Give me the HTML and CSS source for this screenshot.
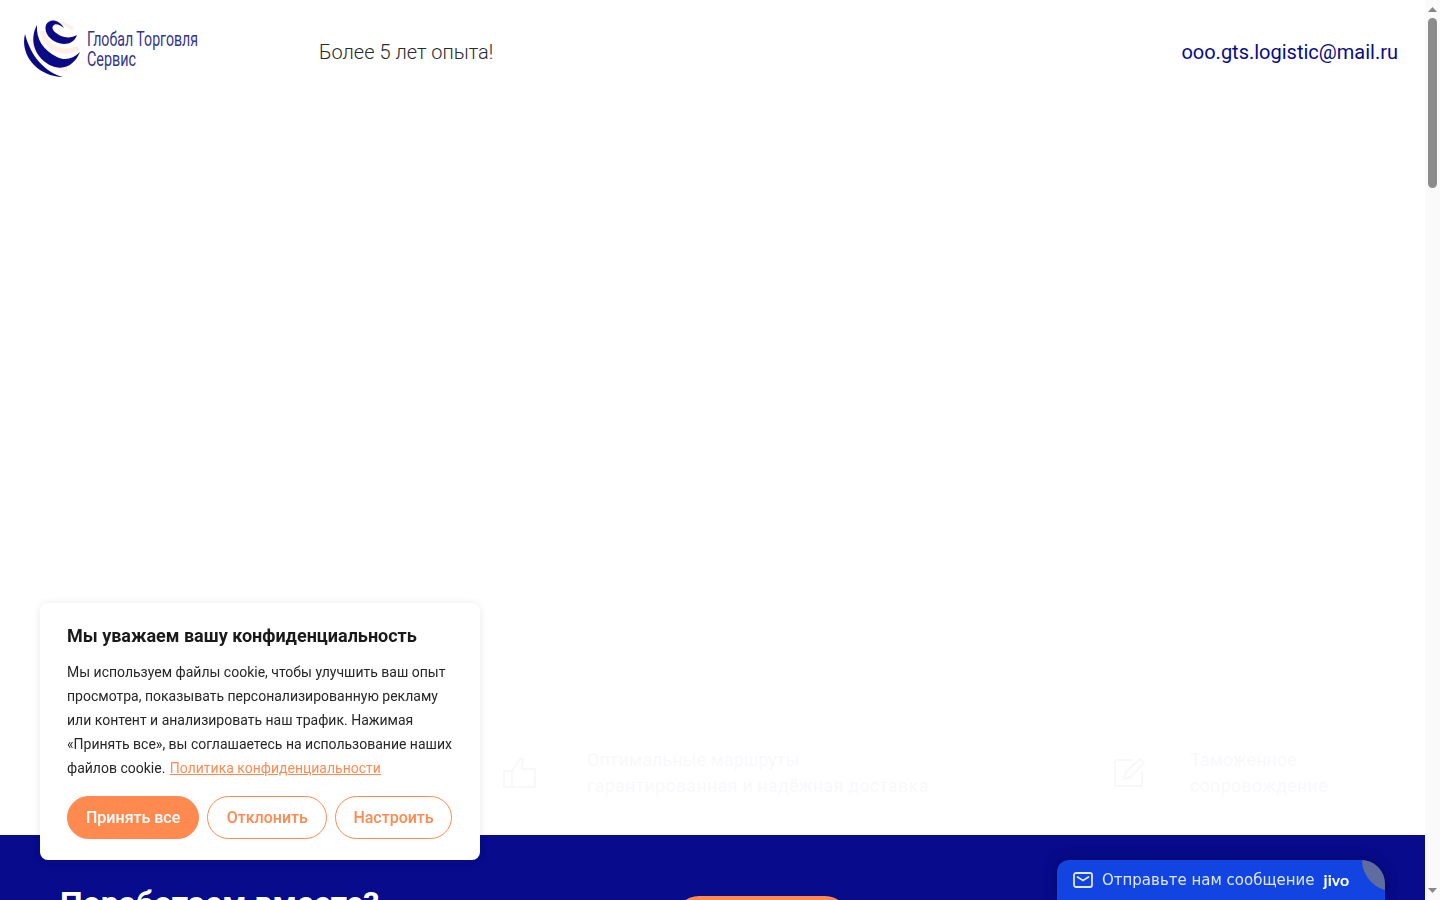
FILE: index.html
```html
<!DOCTYPE html>
<html lang="ru">
<head>
<meta charset="utf-8">
<title>Глобал Торговля Сервис</title>
<link rel="stylesheet" href="styles.css">
</head>
<body>
<div class="page">
  <div class="content">
    <header class="header">
      <a class="logo" href="#">
        <svg class="logo-svg" width="176" height="60" viewBox="0 0 176 60">
          <g fill="none" stroke="#fdeee6">
            <path d="M9 20C13 34 26 46 44 50" stroke-width="5"/>
            <path d="M19 12C22 26 38 38 55 29" stroke-width="5"/>
            <path d="M32 6C38 2 44 6 50 10" stroke-width="3"/>
          </g>
          <g fill="#0a0a85">
            <path d="M2 15C-3 34 12 57 40 58C22 53 8 38 2 15Z"/>
            <path d="M14 6C6 20 11 39 29 47C42 52 52 45 57 33C50 40 42 42 34 38C20 31 13 20 14 6Z"/>
            <path d="M41 9C36 0 26 -1 23 6C20 15 30 25 41 25C47 25 52 22 54 16C49 19 43 19 38 17C32 14 28 10 30 7C32 4 36 5 41 9Z"/>
          </g>
          <text class="logo-text" x="64" y="27" textLength="111" lengthAdjust="spacingAndGlyphs">Глобал Торговля</text>
          <text class="logo-text" x="64" y="47" textLength="49" lengthAdjust="spacingAndGlyphs">Сервис</text>
        </svg>
      </a>
      <p class="slogan">Более 5 лет опыта!</p>
      <a class="email" href="#">ooo.gts.logistic@mail.ru</a>
    </header>
    <main class="hero">
      <div class="features">
        <div class="feature feature-one">
          <svg class="feature-icon" width="34" height="32" viewBox="0 0 34 32" fill="none" stroke="currentColor" stroke-width="2">
            <path d="M1 14h8v16H1zM9 14l8-12h3l-1 10h13v18H9"/>
          </svg>
          <div class="feature-text">
            <div>Оптимальные маршруты</div>
            <div class="feature-sub">гарантированная и надёжная доставка</div>
          </div>
        </div>
        <div class="feature feature-two">
          <svg class="feature-icon" width="32" height="32" viewBox="0 0 32 32" fill="none" stroke="currentColor" stroke-width="2">
            <path d="M18 3H3a2 2 0 0 0-2 2v24h27V14M10 22l2-7L26 2l4 4-14 14z"/>
          </svg>
          <div class="feature-text">
            <div>Таможенное</div>
            <div class="feature-sub">сопровождение</div>
          </div>
        </div>
      </div>
    </main>
    <section class="cta">
      <h2 class="cta-title">Поработаем вместе?</h2>
      <a class="cta-button" href="#">Связаться</a>
    </section>
  </div>
  <div class="scrollbar">
    <svg class="arrow" width="15" height="17" viewBox="0 0 15 17"><path d="M3 12h9L7.500 7z" fill="#888"/></svg>
    <div class="thumb"></div>
    <svg class="arrow arrow-down" width="15" height="17" viewBox="0 0 15 17"><path d="M3 5h9L7.500 10z" fill="#888"/></svg>
  </div>
</div>

<aside class="cookie">
  <h3 class="cookie-title">Мы уважаем вашу конфиденциальность</h3>
  <p class="cookie-text">Мы используем файлы cookie, чтобы улучшить ваш опыт просмотра, показывать персонализированную рекламу или контент и анализировать наш трафик. Нажимая «Принять все», вы соглашаетесь на использование наших файлов cookie. <a class="cookie-link" href="#">Политика конфиденциальности</a></p>
  <div class="cookie-actions">
    <button class="btn btn-fill">Принять все</button>
    <button class="btn btn-line btn-wide">Отклонить</button>
    <button class="btn btn-line btn-narrow">Настроить</button>
  </div>
</aside>

<aside class="jivo">
  <span class="jivo-corner"></span>
  <svg class="jivo-icon" width="20" height="16" viewBox="0 0 20 16" fill="none" stroke="#dfe7ff" stroke-width="1.800">
    <rect x="1" y="1" width="18" height="14" rx="2"/>
    <path d="M4.500 5l5.500 3.500L15.500 5" stroke-linecap="round"/>
  </svg>
  <span class="jivo-text">Отправьте нам сообщение</span>
  <span class="jivo-logo">jivo</span>
</aside>
</body>
</html>
```
FILE: styles.css
```css
* { box-sizing: border-box; }
html, body { margin: 0; height: 100%; overflow: hidden; background: #fff; }
body { font-family: Roboto, "Noto Sans", sans-serif; color: #1f1f1f; }
a { text-decoration: none; color: inherit; }

.page { display: flex; height: 900px; overflow: hidden; }
.content { flex: 1; min-width: 0; display: flex; flex-direction: column; }

.header { height: 105px; flex: none; display: flex; align-items: flex-start; padding: 19px 27px 0 23px; }
.logo { display: block; width: 176px; height: 60px; flex: none; }
.logo-svg { display: block; overflow: hidden; }
.logo-text { font-family: Roboto, sans-serif; font-size: 20px; font-weight: 400; fill: #34348c; }
.slogan { margin: 20px 0 0 120px; font-size: 20px; font-weight: 300; line-height: 26px; color: #2b2b2b; }
.email { margin: 20px 0 0 auto; font-size: 20px; line-height: 26px; color: #070b8c; }

.hero { flex: 1; display: flex; flex-direction: column; justify-content: flex-end; }
.features { display: flex; padding: 0 0 36px 503px; opacity: .022; color: #070b8c; }
.feature { display: flex; align-items: center; gap: 50px; }
.feature-one { width: 611px; }
.feature-icon { flex: none; }
.feature-text { font-size: 18px; line-height: 26px; white-space: nowrap; }
.feature-sub { letter-spacing: .2px; }
.feature-two .feature-text { margin-left: 12px; }
.feature-two { gap: 32px; }

.cta { position: relative; height: 65px; flex: none; background: #070b8c; display: flex; align-items: flex-start; padding: 48px 0 0 60px; overflow: hidden; }
.cta-title { margin: 0; font-size: 32px; line-height: 40px; font-weight: 700; color: #fff; white-space: nowrap; }
.cta-button { margin: 13px 0 0 296px; width: 174px; height: 48px; border-radius: 24px; background: #ff8a50; color: #fff; text-align: center; line-height: 48px; }

.scrollbar { width: 15px; flex: none; background: #fafafa; display: flex; flex-direction: column; align-items: center; }
.arrow { flex: none; }
.arrow-down { margin-top: auto; }
.thumb { width: 9px; height: 170px; margin-top: 1px; border-radius: 5px; background: #8c8c8c; }

.cookie { position: fixed; left: 40px; top: 603px; width: 440px; height: 257px; padding: 21px 27px 0; background: #fff; border-radius: 8px; box-shadow: 0 1px 8px rgba(0, 0, 0, .1); }
.cookie-title { margin: 0 0 12px; font-size: 18px; line-height: 24px; font-weight: 700; color: #1a1a1a; white-space: nowrap; }
.cookie-text { margin: 0; font-size: 14px; line-height: 24px; color: #262626; }
.cookie-link { margin-left: 1px; color: #ff8a50; text-decoration: underline; }
.cookie-actions { display: flex; gap: 8px; margin-top: 16px; }
.btn { flex: none; height: 43px; padding: 0 18px; border-radius: 22px; font: 500 16px/1 Roboto, sans-serif; white-space: nowrap; cursor: pointer; }
.btn-wide { padding: 0 18px 0 18.500px; }
.btn-narrow { padding: 0 17.500px; }
.btn-fill { background: #ff8a50; border: 1px solid #ff8a50; color: #fff; }
.btn-line { background: #fff; border: 1px solid #ff8a50; color: #ff8a50; }

.jivo { position: fixed; left: 1057px; top: 860px; width: 328px; height: 40px; padding: 0 0 0 16px; background: #1144e0; border-radius: 12px 24px 0 0; box-shadow: 0 0 14px rgba(0, 0, 40, .4); display: flex; align-items: center; overflow: hidden; color: #dfe7ff; }
.jivo-corner { position: absolute; right: -39px; top: -31px; width: 62px; height: 62px; border-radius: 50%; background: #5f6d9e; }
.jivo-icon { flex: none; }
.jivo-text { position: relative; margin-left: 9px; font: 15px/1 "DejaVu Sans", sans-serif; white-space: nowrap; }
.jivo-logo { position: relative; margin-left: 9px; font: 700 16px/1 Lato, sans-serif; color: #fff; }
```
